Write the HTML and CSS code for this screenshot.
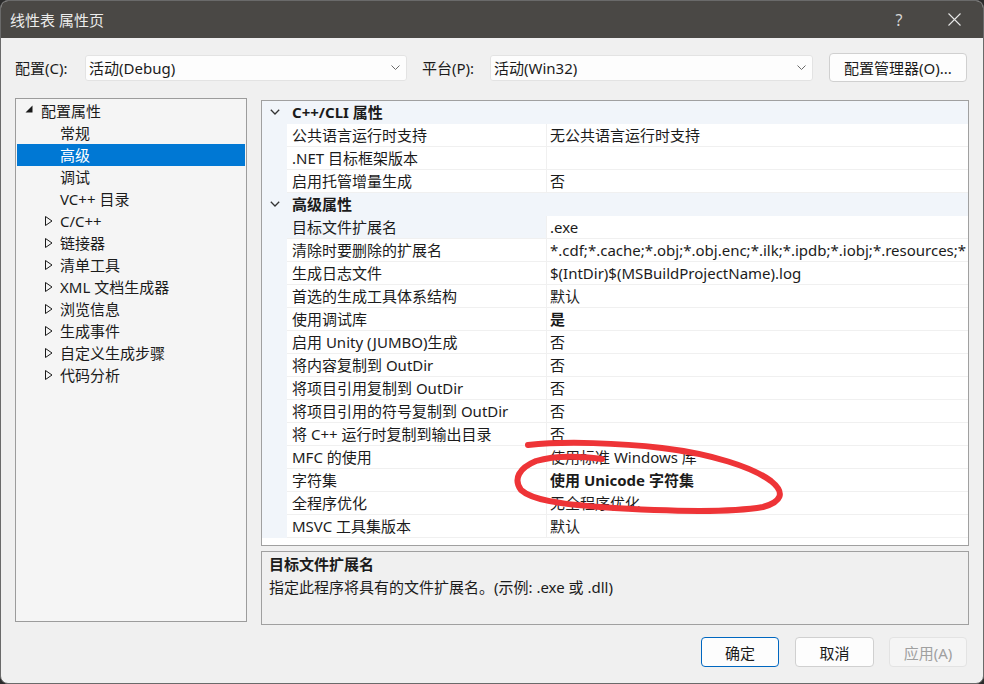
FILE: index.html
```html
<!DOCTYPE html>
<html lang="zh-CN">
<head>
<meta charset="utf-8">
<title>线性表 属性页</title>
<link rel="stylesheet" href="styles.css">
</head>
<body>
<div class="window">
  <div class="titlebar">
    <span class="title">线性表 属性页</span>
    <div class="tb-btns">
      <span class="tb-btn help">?</span>
      <span class="tb-btn"><svg width="13" height="13" viewBox="0 0 13 13"><path d="M0.5 0.5L12.5 12.5M12.5 0.5L0.5 12.5" stroke="#e6e6e6" stroke-width="1.1" fill="none"/></svg></span>
    </div>
  </div>
  <div class="content">
    <div class="config-row">
      <span class="lbl lbl1">配置(C):</span>
      <div class="combo combo1"><span>活动(Debug)</span><svg class="chev" width="9" height="5" viewBox="0 0 9 5"><path d="M0.5 0.5L4.5 4.5L8.5 0.5" stroke="#6a6a6a" fill="none"/></svg></div>
      <span class="lbl lbl2">平台(P):</span>
      <div class="combo combo2"><span>活动(Win32)</span><svg class="chev" width="9" height="5" viewBox="0 0 9 5"><path d="M0.5 0.5L4.5 4.5L8.5 0.5" stroke="#6a6a6a" fill="none"/></svg></div>
      <button class="btn cfgmgr">配置管理器(O)...</button>
    </div>
    <div class="main">
      <div class="tree">
        <div class="item lv0"><svg class="tw-exp" width="8" height="8" viewBox="0 0 8 8"><path d="M7.5 0.5L7.5 7.5L0.5 7.5Z" fill="#1a1a1a"/></svg><span>配置属性</span></div>
        <div class="item lv1">常规</div>
        <div class="item lv1 selected">高级</div>
        <div class="item lv1">调试</div>
        <div class="item lv1">VC++ 目录</div>
        <div class="item lv1t"><svg class="tw-col" width="8" height="10" viewBox="0 0 8 10"><path d="M0.5 0.5L7 5L0.5 9.5Z" fill="none" stroke="#1a1a1a"/></svg><span>C/C++</span></div>
        <div class="item lv1t"><svg class="tw-col" width="8" height="10" viewBox="0 0 8 10"><path d="M0.5 0.5L7 5L0.5 9.5Z" fill="none" stroke="#1a1a1a"/></svg><span>链接器</span></div>
        <div class="item lv1t"><svg class="tw-col" width="8" height="10" viewBox="0 0 8 10"><path d="M0.5 0.5L7 5L0.5 9.5Z" fill="none" stroke="#1a1a1a"/></svg><span>清单工具</span></div>
        <div class="item lv1t"><svg class="tw-col" width="8" height="10" viewBox="0 0 8 10"><path d="M0.5 0.5L7 5L0.5 9.5Z" fill="none" stroke="#1a1a1a"/></svg><span>XML 文档生成器</span></div>
        <div class="item lv1t"><svg class="tw-col" width="8" height="10" viewBox="0 0 8 10"><path d="M0.5 0.5L7 5L0.5 9.5Z" fill="none" stroke="#1a1a1a"/></svg><span>浏览信息</span></div>
        <div class="item lv1t"><svg class="tw-col" width="8" height="10" viewBox="0 0 8 10"><path d="M0.5 0.5L7 5L0.5 9.5Z" fill="none" stroke="#1a1a1a"/></svg><span>生成事件</span></div>
        <div class="item lv1t"><svg class="tw-col" width="8" height="10" viewBox="0 0 8 10"><path d="M0.5 0.5L7 5L0.5 9.5Z" fill="none" stroke="#1a1a1a"/></svg><span>自定义生成步骤</span></div>
        <div class="item lv1t"><svg class="tw-col" width="8" height="10" viewBox="0 0 8 10"><path d="M0.5 0.5L7 5L0.5 9.5Z" fill="none" stroke="#1a1a1a"/></svg><span>代码分析</span></div>
      </div>
      <div class="right">
        <div class="grid">
          <div class="cat"><span class="cat-gut"><svg width="10" height="6" viewBox="0 0 10 6"><path d="M0.8 0.8L5 5L9.2 0.8" stroke="#333" stroke-width="1.3" fill="none"/></svg></span><span class="cat-name">C++/CLI 属性</span></div>
          <div class="row"><span class="gut"></span><span class="name">公共语言运行时支持</span><span class="val">无公共语言运行时支持</span></div>
          <div class="row"><span class="gut"></span><span class="name">.NET 目标框架版本</span><span class="val"></span></div>
          <div class="row"><span class="gut"></span><span class="name">启用托管增量生成</span><span class="val">否</span></div>
          <div class="cat"><span class="cat-gut"><svg width="10" height="6" viewBox="0 0 10 6"><path d="M0.8 0.8L5 5L9.2 0.8" stroke="#333" stroke-width="1.3" fill="none"/></svg></span><span class="cat-name">高级属性</span></div>
          <div class="row sel"><span class="gut"></span><span class="name">目标文件扩展名</span><span class="val">.exe</span></div>
          <div class="row"><span class="gut"></span><span class="name">清除时要删除的扩展名</span><span class="val">*.cdf;*.cache;*.obj;*.obj.enc;*.ilk;*.ipdb;*.iobj;*.resources;*</span></div>
          <div class="row"><span class="gut"></span><span class="name">生成日志文件</span><span class="val">$(IntDir)$(MSBuildProjectName).log</span></div>
          <div class="row"><span class="gut"></span><span class="name">首选的生成工具体系结构</span><span class="val">默认</span></div>
          <div class="row"><span class="gut"></span><span class="name">使用调试库</span><span class="val bold">是</span></div>
          <div class="row"><span class="gut"></span><span class="name">启用 Unity (JUMBO)生成</span><span class="val">否</span></div>
          <div class="row"><span class="gut"></span><span class="name">将内容复制到 OutDir</span><span class="val">否</span></div>
          <div class="row"><span class="gut"></span><span class="name">将项目引用复制到 OutDir</span><span class="val">否</span></div>
          <div class="row"><span class="gut"></span><span class="name">将项目引用的符号复制到 OutDir</span><span class="val">否</span></div>
          <div class="row"><span class="gut"></span><span class="name">将 C++ 运行时复制到输出目录</span><span class="val">否</span></div>
          <div class="row"><span class="gut"></span><span class="name">MFC 的使用</span><span class="val">使用标准 Windows 库</span></div>
          <div class="row"><span class="gut"></span><span class="name">字符集</span><span class="val bold">使用 Unicode 字符集</span></div>
          <div class="row"><span class="gut"></span><span class="name">全程序优化</span><span class="val">无全程序优化</span></div>
          <div class="row"><span class="gut"></span><span class="name">MSVC 工具集版本</span><span class="val">默认</span></div>
        </div>
        <div class="desc">
          <div class="desc-title">目标文件扩展名</div>
          <div class="desc-text">指定此程序将具有的文件扩展名。(示例: .exe 或 .dll)</div>
        </div>
      </div>
    </div>
    <div class="buttons">
      <button class="btn ok">确定</button>
      <button class="btn cancel">取消</button>
      <button class="btn apply" disabled>应用(A)</button>
    </div>
  </div>
  <svg class="annotation" width="984" height="684" viewBox="0 0 984 684">
    <path d="M528 445 C565 441 620 443 662 448 C712 454 752 467 771 481 C786 493 781 502 763 507 C728 513 660 511 600 507 C560 504 532 500 521 490 C513 479 519 468 536 461 C556 455 580 456 602 459" fill="none" stroke="#ee3437" stroke-width="6" stroke-linecap="round" stroke-linejoin="round"/>
  </svg>
</div>
</body>
</html>
```

FILE: styles.css
```css
html, body {
  margin: 0;
  padding: 0;
  background: #2b2b2b;
}
body {
  font-family: "Noto Sans", "Noto Sans CJK SC", sans-serif;
  font-size: 15px;
  color: #1b1b1b;
}
.window {
  position: relative;
  width: 984px;
  height: 684px;
  box-sizing: border-box;
  border: 1px solid #6a6a6a;
  border-radius: 8px;
  overflow: hidden;
  background: #f0f0f0;
}
.titlebar {
  height: 37px;
  background: #4a4845;
  display: flex;
  align-items: center;
  padding-left: 9px;
  color: #ececec;
}
.title {
  line-height: 20px;
}
.tb-btns {
  margin-left: auto;
  margin-right: 6px;
  display: flex;
  gap: 9px;
  height: 37px;
}
.tb-btn {
  width: 46px;
  display: flex;
  align-items: center;
  justify-content: center;
}
.help {
  color: #d6d6d6;
  font-size: 16px;
}
.content {
  padding: 0 14px;
}
.config-row {
  margin-top: 15px;
  height: 29px;
  display: flex;
  align-items: center;
}
.lbl {
  white-space: nowrap;
}
.lbl1 { width: 70px; }
.lbl2 { width: 68px; }
.combo {
  height: 26px;
  box-sizing: border-box;
  background: #fdfdfd;
  border: 1px solid #e3e3e3;
  border-radius: 3px;
  display: flex;
  align-items: center;
  padding: 0 6px 0 3px;
}
.combo span { flex: 1; }
.combo1 { width: 322px; margin-right: 15px; }
.combo2 { width: 323px; margin-right: 16px; }
.btn {
  font-family: "Noto Sans", "Noto Sans CJK SC", sans-serif;
  font-size: 15px;
  color: #1b1b1b;
  background: #fdfdfd;
  border: 1px solid #d0d0d0;
  border-radius: 4px;
  padding: 0;
  box-sizing: border-box;
}
.cfgmgr {
  width: 138px;
  height: 29px;
}
.main {
  margin-top: 16px;
  height: 527px;
  display: flex;
  align-items: flex-start;
}
.tree {
  width: 232px;
  height: 524px;
  box-sizing: border-box;
  background: #f5f5f5;
  border: 1px solid #9c9c9c;
  padding: 1px;
}
.item {
  height: 22px;
  line-height: 22px;
  display: flex;
  align-items: center;
  white-space: nowrap;
}
.lv0 { padding-left: 8px; }
.tw-exp { margin-right: 8px; margin-top: -4px; }
.lv1 { padding-left: 43px; }
.lv1t { padding-left: 28px; }
.tw-col { margin-right: 7px; }
.selected {
  background: #0078d4;
  color: #fff;
}
.right {
  margin-left: 14px;
  margin-top: 2px;
  width: 708px;
}
.grid {
  height: 446px;
  box-sizing: border-box;
  border: 1px solid #a0a0a0;
  background: #fff;
  overflow: hidden;
}
.cat, .row {
  display: flex;
  height: 23px;
}
.cat {
  background: #f1f5fa;
  border-bottom: 1px solid #f1f5fa;
  box-sizing: border-box;
}
.cat-gut {
  width: 25px;
  display: flex;
  align-items: center;
  justify-content: center;
}
.cat-name {
  padding-left: 5px;
  line-height: 22px;
  font-weight: bold;
}
.gut {
  width: 25px;
  flex: none;
  background: #f1f5fa;
}
.name {
  width: 260px;
  flex: none;
  box-sizing: border-box;
  padding-left: 5px;
  line-height: 22px;
  border-bottom: 1px solid #f0f0f0;
  border-right: 1px solid #f0f0f0;
  white-space: nowrap;
  overflow: hidden;
}
.val {
  flex: 1;
  min-width: 0;
  padding-left: 3px;
  line-height: 22px;
  border-bottom: 1px solid #f0f0f0;
  white-space: nowrap;
  overflow: hidden;
}
.row.sel .name {
  background: #f1f5fa;
}
.bold { font-weight: bold; }
.desc {
  margin-top: 5px;
  height: 74px;
  box-sizing: border-box;
  border: 1px solid #a0a0a0;
  padding: 1px 7px;
  line-height: 23px;
}
.desc-title { font-weight: bold; }
.buttons {
  margin-top: 12px;
  display: flex;
  justify-content: flex-end;
  padding-right: 2px;
}
.buttons .btn { height: 30px; }
.ok {
  width: 78px;
  border-color: #0067c0;
  margin-right: 16px;
}
.cancel {
  width: 79px;
  margin-right: 15px;
}
.apply {
  width: 78px;
  background: #f5f5f5;
  border-color: #e3e3e3;
  color: #a0a0a0;
}
.annotation {
  position: absolute;
  left: -1px;
  top: -1px;
  pointer-events: none;
}
```
